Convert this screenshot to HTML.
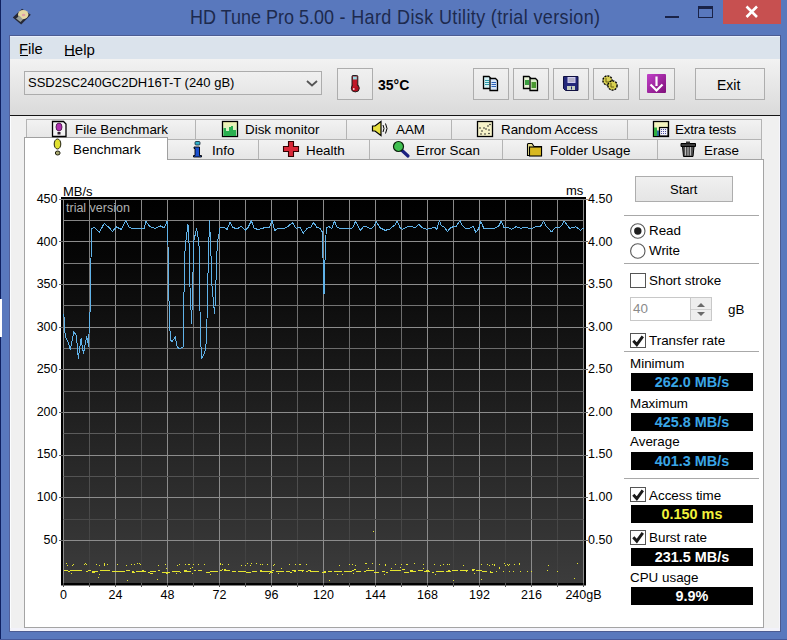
<!DOCTYPE html>
<html><head><meta charset="utf-8">
<style>
*{margin:0;padding:0;box-sizing:border-box}
html,body{width:787px;height:640px;overflow:hidden}
body{position:relative;background:#5978bd;font-family:"Liberation Sans",sans-serif;color:#000}
.a{position:absolute}
.t{position:absolute;white-space:nowrap;line-height:1}
#client{left:10px;top:36px;width:770px;height:595px;background:#f0f0f0}
#menu{left:10px;top:36px;width:770px;height:23px;background:#dbe3ec;border-top:1px solid #eaf0fc}
#tool{left:10px;top:59px;width:770px;height:56px;background:linear-gradient(#f2f2f2,#dadada)}
#dark{left:10px;top:115px;width:770px;height:1px;background:#151515}
.btn{position:absolute;border:1px solid #adadad;background:linear-gradient(#f0f0f0,#e5e5e5)}
.tab{position:absolute;border:1px solid #b4b4b4;background:linear-gradient(#f2f2f2,#e6e6e6);font-size:13.4px}
.tab span{position:absolute;white-space:nowrap;line-height:1;top:3px}
#panel{left:24px;top:159px;width:740px;height:469px;background:#fff;border:1px solid #a4a4a4}
.sep{position:absolute;left:624px;width:135px;height:1px;background:#a8a8a8}
.box{position:absolute;left:631px;width:122px;height:18px;background:#000;font-weight:bold;font-size:14.4px;text-align:center;line-height:19px}
.chk{position:absolute;left:630px;width:16px;height:15px;border:1px solid #555;background:#fff}
.lbl{font-size:13.4px}
.yl{left:20px;width:37.5px;text-align:right;font-size:12.5px}
.yr{left:588px;font-size:12.5px}
.xl{top:589px;width:80px;text-align:center;font-size:12.5px}
</style></head><body>
<!-- window border -->
<div class="a" style="left:0;top:0;width:1px;height:640px;background:#0f2060"></div>
<div class="a" style="left:0;top:299px;width:2px;height:38px;background:#fff"></div>
<!-- title -->
<div class="t" style="left:190px;top:6.6px;font-size:18px;color:#1d2a4e;transform:scaleY(1.1);transform-origin:0 0">HD Tune Pro 5.00<span style="letter-spacing:0.37px"> - Hard Disk Utility (trial version)</span></div>
<div class="a" style="left:723px;top:0;width:58px;height:24px;background:#c75050"></div>
<svg class="a" style="left:0;top:0" width="787" height="36">
 <path d="M746.5 6.5 L757 17 M757 6.5 L746.5 17" stroke="#fff" stroke-width="2.6"/>
 <rect x="665" y="16" width="14" height="2" fill="#1a2348"/>
 <rect x="698.5" y="6.5" width="14" height="11" fill="none" stroke="#1a2348" stroke-width="1"/>
 <rect x="698" y="6" width="15" height="3" fill="#1a2348"/>
 <path d="M12.8 17.5 L22 8.8 L30.8 14.8 L21.2 24.6 Z" fill="#262836"/>
 <ellipse cx="23.2" cy="14.6" rx="5.2" ry="4.6" fill="#e6d8a2"/>
 <ellipse cx="23.6" cy="15" rx="1.8" ry="1.2" fill="#e0a0a8"/>
 <path d="M16 18.5 L19.5 15.8 L23 19.5 L20.5 22 Z" fill="#9aa098"/>
</svg>
<div class="a" id="client"></div>
<div class="a" style="left:9px;top:35px;width:772px;height:1px;background:#4c5c92"></div>
<div class="a" style="left:9px;top:631px;width:772px;height:1px;background:#4c5c92"></div>
<div class="a" style="left:9px;top:35px;width:1px;height:597px;background:#52609a"></div>
<div class="a" style="left:780px;top:35px;width:1px;height:597px;background:#4c5a8e"></div>
<div class="a" style="left:10px;top:36px;width:1px;height:595px;background:#fbfdff"></div>
<div class="a" style="left:779px;top:36px;width:1px;height:595px;background:#f6f6fc"></div>
<div class="a" style="left:10px;top:628px;width:770px;height:3px;background:#f2f2fa"></div>
<div class="a" style="left:0;top:639px;width:787px;height:1px;background:#46599a"></div>
<div class="a" id="menu"></div>
<div class="t" style="left:19px;top:41.5px;font-size:14.8px">File</div>
<div class="a" style="left:20px;top:55px;width:8px;height:1px;background:#000"></div>
<div class="t" style="left:64px;top:41.5px;font-size:15px">Help</div>
<div class="a" style="left:65px;top:55px;width:10px;height:1px;background:#000"></div>
<div class="a" id="tool"></div>
<div class="a" id="dark"></div>

<!-- combo -->
<div class="a" style="left:24px;top:71px;width:298px;height:24px;border:1px solid #acacac;background:linear-gradient(#f0f0f0,#e6e6e6)"></div>
<div class="t" style="left:28px;top:76px;font-size:13px">SSD2SC240GC2DH16T-T (240 gB)</div>
<svg class="a" style="left:305px;top:79px" width="14" height="9"><path d="M2 2 L7 6.5 L12 2" fill="none" stroke="#555" stroke-width="1.8"/></svg>

<!-- toolbar buttons -->
<div class="btn" style="left:337px;top:68px;width:36px;height:32px"></div>
<div class="t" style="left:378px;top:78px;font-size:14px;font-weight:bold">35°C</div>
<div class="btn" style="left:473px;top:68px;width:36px;height:32px"></div>
<div class="btn" style="left:513px;top:68px;width:36px;height:32px"></div>
<div class="btn" style="left:553px;top:68px;width:36px;height:32px"></div>
<div class="btn" style="left:593px;top:68px;width:36px;height:32px"></div>
<div class="btn" style="left:639px;top:68px;width:36px;height:32px"></div>
<div class="btn" style="left:695px;top:68px;width:70px;height:32px"></div>
<div class="t" style="left:717px;top:78px;font-size:14px">Exit</div>

<!-- tabs row 1 -->
<div class="tab" style="left:26px;top:119px;width:170px;height:21px"><span style="left:48px">File Benchmark</span></div>
<div class="tab" style="left:195px;top:119px;width:152px;height:21px"><span style="left:49px">Disk monitor</span></div>
<div class="tab" style="left:346px;top:119px;width:106px;height:21px"><span style="left:49px">AAM</span></div>
<div class="tab" style="left:451px;top:119px;width:177px;height:21px"><span style="left:49px">Random Access</span></div>
<div class="tab" style="left:627px;top:119px;width:135px;height:21px"><span style="left:47px;letter-spacing:-0.2px">Extra tests</span></div>
<!-- tabs row 2 -->
<div class="tab" style="left:167px;top:139px;width:92px;height:21px"><span style="left:44px;top:4px">Info</span></div>
<div class="tab" style="left:258px;top:139px;width:112px;height:21px"><span style="left:47px;top:4px">Health</span></div>
<div class="tab" style="left:369px;top:139px;width:134px;height:21px"><span style="left:46px;top:4px">Error Scan</span></div>
<div class="tab" style="left:502px;top:139px;width:156px;height:21px"><span style="left:47px;top:4px">Folder Usage</span></div>
<div class="tab" style="left:657px;top:139px;width:105px;height:21px"><span style="left:46px;top:4px">Erase</span></div>

<div class="a" id="panel"></div>
<div class="a" style="left:24px;top:137px;width:144px;height:23px;background:#fff;border:1px solid #a0a0a0;border-bottom:none"></div>
<div class="t" style="left:73px;top:143px;font-size:13.4px">Benchmark</div>

<!-- right panel -->
<div class="btn" style="left:635px;top:176px;width:98px;height:26px"></div>
<div class="t" style="left:670px;top:183px;font-size:13px">Start</div>
<div class="sep" style="top:215px"></div>
<svg class="a" style="left:629px;top:222px" width="18" height="38">
 <circle cx="8.8" cy="9" r="7.2" fill="#fff" stroke="#5a5a5a" stroke-width="1.1"/>
 <circle cx="8.8" cy="9" r="3.7" fill="#1e1e1e"/>
 <circle cx="8.8" cy="29" r="7.2" fill="#fff" stroke="#5a5a5a" stroke-width="1.1"/>
</svg>
<div class="t lbl" style="left:649px;top:224px">Read</div>
<div class="t lbl" style="left:649px;top:244px">Write</div>
<div class="sep" style="top:263px"></div>
<div class="chk" style="top:273px"></div>
<div class="t lbl" style="left:649px;top:274px">Short stroke</div>
<div class="a" style="left:630px;top:297px;width:82px;height:24px;border:1px solid #c8c8c8;background:#fff"></div>
<div class="a" style="left:690px;top:298px;width:21px;height:22px;background:#eee;border-left:1px solid #c8c8c8"></div>
<div class="t lbl" style="left:633px;top:302px;color:#8a8a8a">40</div>
<div class="a" style="left:691px;top:309px;width:20px;height:1px;background:#d0d0d0"></div>
<svg class="a" style="left:690px;top:298px" width="22" height="23"><path d="M7 9 L11 5 L15 9 Z M7 14 L11 18 L15 14 Z" fill="#6a6a6a"/></svg>
<div class="t lbl" style="left:728px;top:303px">gB</div>
<div class="chk" style="top:333px"></div>
<div class="t lbl" style="left:649px;top:334px">Transfer rate</div>
<div class="sep" style="top:351px"></div>
<div class="t lbl" style="left:630px;top:357px">Minimum</div>
<div class="box" style="top:373px;color:#3aa6e6">262.0 MB/s</div>
<div class="t lbl" style="left:630px;top:397px">Maximum</div>
<div class="box" style="top:413px;color:#3aa6e6">425.8 MB/s</div>
<div class="t lbl" style="left:630px;top:435px">Average</div>
<div class="box" style="top:452px;color:#3aa6e6">401.3 MB/s</div>
<div class="sep" style="top:478px"></div>
<div class="chk" style="top:487px"></div>
<div class="t lbl" style="left:649px;top:489px">Access time</div>
<div class="box" style="top:505px;color:#f2f23c">0.150 ms</div>
<div class="chk" style="top:530px"></div>
<div class="t lbl" style="left:649px;top:531px">Burst rate</div>
<div class="box" style="top:548px;color:#fff">231.5 MB/s</div>
<div class="t lbl" style="left:630px;top:571px">CPU usage</div>
<div class="box" style="top:587px;color:#fff">9.9%</div>

<svg class="a" style="left:0;top:0" width="787" height="640">
 <defs>
  <linearGradient id="mag" x1="0" y1="0" x2="1" y2="1"><stop offset="0" stop-color="#c040c8"/><stop offset="1" stop-color="#80107a"/></linearGradient>
  <linearGradient id="dm" x1="0" y1="0" x2="0" y2="1"><stop offset="0" stop-color="#f4f4b0"/><stop offset="1" stop-color="#c8f0d8"/></linearGradient>
 </defs>
 <!-- thermometer -->
 <rect x="352" y="75.5" width="5.8" height="12" rx="1" fill="#b01020" stroke="#222" stroke-width="1"/>
 <rect x="353" y="76.5" width="3.8" height="3" fill="#9adce4"/>
 <ellipse cx="355.3" cy="88.2" rx="4" ry="3.7" fill="#b01020" stroke="#222" stroke-width="1"/>
 <rect x="353" y="80" width="3.8" height="7.5" fill="#c01828"/><rect x="353" y="88" width="1.5" height="2" fill="#f0c0c8"/>
 <!-- copy docs -->
 <g stroke="#000" stroke-width="1.3" stroke-linejoin="miter">
  <path d="M483.5 76.5 H489 L491 78.5 V88.5 H483.5 Z" fill="#d4f2f6"/>
  <path d="M490 78.5 H495.5 L497.5 80.5 V90.5 H490 Z" fill="#d8e6f8"/>
  <path d="M523.5 76.5 H529 L531 78.5 V88.5 H523.5 Z" fill="#e8f4d8"/>
  <path d="M530 78.5 H535.5 L537.5 80.5 V90.5 H530 Z" fill="#d8ecc8"/>
 </g>
 <g stroke-width="1.2">
  <path d="M485 80.5 H489 M485 82.5 H489 M485 84.5 H489" stroke="#2a9aa8"/>
  <path d="M491.5 82.5 H496 M491.5 84.5 H496 M491.5 86.5 H496" stroke="#2a60b8"/>
 </g>
 <rect x="525" y="80" width="4" height="5" fill="#3aa040"/>
 <rect x="531.5" y="82" width="4.5" height="6" fill="#4a9a30"/>
 <!-- floppy -->
 <path d="M563.5 76.5 H578 V90.5 H565.5 L563.5 88.5 Z" fill="#24287a" stroke="#101040" stroke-width="1"/>
 <rect x="567.5" y="77" width="8" height="6" fill="#d0ccf0"/>
 <path d="M568.5 79 H574.5 M568.5 81 H574.5" stroke="#8a8a90" stroke-width="0.8"/>
 <rect x="567" y="86" width="8" height="4" fill="#c8d0c0"/>
 <rect x="571" y="86.5" width="1" height="3" fill="#24287a"/>
 <!-- coins -->
 <g stroke="#000" stroke-width="1.4" fill="#d8d050">
  <circle cx="607.5" cy="80.5" r="4.6" stroke-dasharray="2 1"/>
  <circle cx="612.5" cy="85.5" r="4.6" stroke-dasharray="2 1"/>
 </g>
 <path d="M606 78 V82 H609 M611 83 V87 H614" stroke="#6a6010" stroke-width="1" fill="none"/>
 <!-- magenta -->
 <rect x="647" y="74" width="19" height="19" rx="1" fill="url(#mag)"/>
 <path d="M656.5 76.5 V86" stroke="#fff" stroke-width="2.2"/>
 <path d="M650.5 84.5 L656.5 90.5 L662.5 84.5" stroke="#fff" stroke-width="2.2" fill="none"/>
 <!-- tab icons row1 -->
 <path d="M52.5 121.5 H63.5 L66 124 V136.5 H52.5 Z" fill="#f4f4f4" stroke="#000" stroke-width="1.3"/>
 <ellipse cx="59" cy="127" rx="3" ry="4" fill="#b030b0" stroke="#401040" stroke-width="0.8"/>
 <rect x="57.5" y="132" width="3" height="2.5" fill="#302030"/>
 <rect x="222.5" y="121.5" width="15" height="15" fill="url(#dm)" stroke="#000" stroke-width="1.3"/>
 <path d="M223.5 136 V128 H226 V131 H229 V127 H231 V126 H233 V130 H236 V136 Z" fill="#2ab050"/>
 <path d="M372.5 126 H375 L381 121.5 V135.5 L375 131 H372.5 Z" fill="#e8e040" stroke="#000" stroke-width="1.2"/>
 <path d="M383 125 Q385 128.5 383 132 M385.5 123.5 Q388.5 128.5 385.5 133.5" stroke="#000" stroke-width="1" fill="none"/>
 <rect x="477.5" y="121.5" width="15" height="15" fill="#f6f2c8" stroke="#000" stroke-width="1.3"/>
 <g fill="#222"><circle cx="480" cy="128" r=".8"/><circle cx="484" cy="128" r=".8"/><circle cx="482" cy="131" r=".8"/><circle cx="486" cy="129" r=".8"/><circle cx="488" cy="126" r=".8"/><circle cx="489" cy="130" r=".8"/><circle cx="481" cy="134" r=".8"/><circle cx="485" cy="134" r=".8"/><circle cx="489" cy="133.5" r=".8"/><circle cx="490" cy="124.5" r=".8"/></g>
 <rect x="653.5" y="121.5" width="15" height="15" fill="#f4f4c0" stroke="#000" stroke-width="1.3"/>
 <rect x="654" y="127.5" width="3" height="8.5" fill="#30b040"/>
 <rect x="657" y="130.5" width="2.5" height="5.5" fill="#2a70a0"/>
 <rect x="659.5" y="127.5" width="8.5" height="8.5" fill="#f0f0f8" stroke="#000" stroke-width="1.2"/>
 <g fill="#5050a0"><rect x="661" y="129" width="1" height="1"/><rect x="663" y="129" width="1" height="1"/><rect x="665" y="129" width="1" height="1"/><rect x="661" y="131" width="1" height="1"/><rect x="663" y="131" width="1" height="1"/><rect x="665" y="131" width="1" height="1"/><rect x="661" y="133" width="1" height="1"/><rect x="663" y="133" width="1" height="1"/><rect x="665" y="133" width="1" height="1"/></g>
 <!-- row2 icons -->
 <ellipse cx="57.5" cy="144" rx="3.3" ry="5" fill="#e0e030" stroke="#202010" stroke-width="1"/>
 <ellipse cx="57.7" cy="153" rx="2.4" ry="2" fill="#a8a870" stroke="#202010" stroke-width="1"/>
 <rect x="195" y="141.5" width="5" height="3.5" rx="1" fill="#30b0c8" stroke="#102030" stroke-width="0.8"/>
 <path d="M194 147 H199.5 V155.5 H201.5 V157 H193.5 V155.5 H195 V148.5 H194 Z" fill="#1a50d0" stroke="#000" stroke-width="0.9"/>
 <path d="M288.5 141.5 H293.5 V146.5 H298.5 V151.5 H293.5 V156.5 H288.5 V151.5 H283.5 V146.5 H288.5 Z" fill="#d82838" stroke="#300" stroke-width="1.1"/>
 <path d="M401.5 150 L408 156" stroke="#1a2080" stroke-width="3.2" stroke-linecap="round"/>
 <circle cx="398.5" cy="146.5" r="5" fill="#40c050" stroke="#0a200a" stroke-width="1.2"/>
 <path d="M527.5 144 V155.5 H541.5 V146.5 H534 L532 143.5 H528.5 Z" fill="#e8e090" stroke="#000" stroke-width="1.1"/>
 <rect x="529.5" y="147" width="12" height="9" fill="#d8b820" stroke="#000" stroke-width="1.1"/>
 <path d="M681 143.5 H695.5 V146.5 H681 Z" fill="#3a3a3a" stroke="#000" stroke-width="1"/>
 <path d="M682.5 146.5 H694 L693 156.5 H683.5 Z" fill="#505050" stroke="#000" stroke-width="1"/>
 <path d="M685.5 147 V155.5 M688 147 V155.5 M690.5 147 V155.5" stroke="#c8c8c8" stroke-width="0.9"/>
 <rect x="686" y="141.5" width="4" height="2" fill="#333"/>
 <!-- checkmarks -->
 <g stroke="#1a1a1a" stroke-width="2.9" fill="none">
  <path d="M633.3 340.8 L636.8 344.6 L642.8 336.4"/>
  <path d="M633.3 494.8 L636.8 498.6 L642.8 490.4"/>
  <path d="M633.3 537.3 L636.8 541.1 L642.8 532.9"/>
 </g>
</svg>

<!-- chart -->
<svg class="a" style="left:0;top:0" width="787" height="640">
<defs><linearGradient id="bg" x1="0" y1="0" x2="0" y2="1"><stop offset="0" stop-color="#000"/><stop offset="0.15" stop-color="#060606"/><stop offset="1" stop-color="#3c3c3c"/></linearGradient></defs>
<rect x="61" y="197" width="525" height="388.5" fill="#000"/>
<rect x="63" y="199" width="521" height="384" fill="url(#bg)"/>
<defs><linearGradient id="mg" gradientUnits="userSpaceOnUse" x1="0" y1="199" x2="0" y2="583"><stop offset="0" stop-color="#8a8a8a"/><stop offset="0.5" stop-color="#5c5c5c"/><stop offset="1" stop-color="#3e3e3e"/></linearGradient></defs>
<line x1="63.5" y1="199" x2="63.5" y2="583" stroke="#8c8c8c" stroke-width="1"/>
<line x1="63.5" y1="583" x2="63.5" y2="587" stroke="#555" stroke-width="1"/>
<line x1="89.5" y1="199" x2="89.5" y2="583" stroke="url(#mg)" stroke-width="1"/>
<line x1="89.5" y1="583" x2="89.5" y2="587" stroke="#555" stroke-width="1"/>
<line x1="115.5" y1="199" x2="115.5" y2="583" stroke="#8c8c8c" stroke-width="1"/>
<line x1="115.5" y1="583" x2="115.5" y2="587" stroke="#555" stroke-width="1"/>
<line x1="141.5" y1="199" x2="141.5" y2="583" stroke="url(#mg)" stroke-width="1"/>
<line x1="141.5" y1="583" x2="141.5" y2="587" stroke="#555" stroke-width="1"/>
<line x1="167.5" y1="199" x2="167.5" y2="583" stroke="#8c8c8c" stroke-width="1"/>
<line x1="167.5" y1="583" x2="167.5" y2="587" stroke="#555" stroke-width="1"/>
<line x1="193.5" y1="199" x2="193.5" y2="583" stroke="url(#mg)" stroke-width="1"/>
<line x1="193.5" y1="583" x2="193.5" y2="587" stroke="#555" stroke-width="1"/>
<line x1="219.5" y1="199" x2="219.5" y2="583" stroke="#8c8c8c" stroke-width="1"/>
<line x1="219.5" y1="583" x2="219.5" y2="587" stroke="#555" stroke-width="1"/>
<line x1="245.5" y1="199" x2="245.5" y2="583" stroke="url(#mg)" stroke-width="1"/>
<line x1="245.5" y1="583" x2="245.5" y2="587" stroke="#555" stroke-width="1"/>
<line x1="271.5" y1="199" x2="271.5" y2="583" stroke="#8c8c8c" stroke-width="1"/>
<line x1="271.5" y1="583" x2="271.5" y2="587" stroke="#555" stroke-width="1"/>
<line x1="297.5" y1="199" x2="297.5" y2="583" stroke="url(#mg)" stroke-width="1"/>
<line x1="297.5" y1="583" x2="297.5" y2="587" stroke="#555" stroke-width="1"/>
<line x1="323.5" y1="199" x2="323.5" y2="583" stroke="#8c8c8c" stroke-width="1"/>
<line x1="323.5" y1="583" x2="323.5" y2="587" stroke="#555" stroke-width="1"/>
<line x1="349.5" y1="199" x2="349.5" y2="583" stroke="url(#mg)" stroke-width="1"/>
<line x1="349.5" y1="583" x2="349.5" y2="587" stroke="#555" stroke-width="1"/>
<line x1="375.5" y1="199" x2="375.5" y2="583" stroke="#8c8c8c" stroke-width="1"/>
<line x1="375.5" y1="583" x2="375.5" y2="587" stroke="#555" stroke-width="1"/>
<line x1="401.5" y1="199" x2="401.5" y2="583" stroke="url(#mg)" stroke-width="1"/>
<line x1="401.5" y1="583" x2="401.5" y2="587" stroke="#555" stroke-width="1"/>
<line x1="427.5" y1="199" x2="427.5" y2="583" stroke="#8c8c8c" stroke-width="1"/>
<line x1="427.5" y1="583" x2="427.5" y2="587" stroke="#555" stroke-width="1"/>
<line x1="453.5" y1="199" x2="453.5" y2="583" stroke="url(#mg)" stroke-width="1"/>
<line x1="453.5" y1="583" x2="453.5" y2="587" stroke="#555" stroke-width="1"/>
<line x1="479.5" y1="199" x2="479.5" y2="583" stroke="#8c8c8c" stroke-width="1"/>
<line x1="479.5" y1="583" x2="479.5" y2="587" stroke="#555" stroke-width="1"/>
<line x1="505.5" y1="199" x2="505.5" y2="583" stroke="url(#mg)" stroke-width="1"/>
<line x1="505.5" y1="583" x2="505.5" y2="587" stroke="#555" stroke-width="1"/>
<line x1="531.5" y1="199" x2="531.5" y2="583" stroke="#8c8c8c" stroke-width="1"/>
<line x1="531.5" y1="583" x2="531.5" y2="587" stroke="#555" stroke-width="1"/>
<line x1="557.5" y1="199" x2="557.5" y2="583" stroke="url(#mg)" stroke-width="1"/>
<line x1="557.5" y1="583" x2="557.5" y2="587" stroke="#555" stroke-width="1"/>
<line x1="583.5" y1="199" x2="583.5" y2="583" stroke="#8c8c8c" stroke-width="1"/>
<line x1="583.5" y1="583" x2="583.5" y2="587" stroke="#555" stroke-width="1"/>
<line x1="63.5" y1="540.5" x2="583.5" y2="540.5" stroke="#8c8c8c" stroke-width="1"/>
<line x1="59" y1="540.5" x2="63.5" y2="540.5" stroke="#666" stroke-width="1"/>
<line x1="583.5" y1="540.5" x2="588" y2="540.5" stroke="#666" stroke-width="1"/>
<line x1="63.5" y1="519.5" x2="583.5" y2="519.5" stroke="#4a4a4a" stroke-width="1"/>
<line x1="63.5" y1="497.5" x2="583.5" y2="497.5" stroke="#8c8c8c" stroke-width="1"/>
<line x1="59" y1="497.5" x2="63.5" y2="497.5" stroke="#666" stroke-width="1"/>
<line x1="583.5" y1="497.5" x2="588" y2="497.5" stroke="#666" stroke-width="1"/>
<line x1="63.5" y1="476.5" x2="583.5" y2="476.5" stroke="#535353" stroke-width="1"/>
<line x1="63.5" y1="455.5" x2="583.5" y2="455.5" stroke="#8c8c8c" stroke-width="1"/>
<line x1="59" y1="455.5" x2="63.5" y2="455.5" stroke="#666" stroke-width="1"/>
<line x1="583.5" y1="455.5" x2="588" y2="455.5" stroke="#666" stroke-width="1"/>
<line x1="63.5" y1="433.5" x2="583.5" y2="433.5" stroke="#5b5b5b" stroke-width="1"/>
<line x1="63.5" y1="412.5" x2="583.5" y2="412.5" stroke="#8c8c8c" stroke-width="1"/>
<line x1="59" y1="412.5" x2="63.5" y2="412.5" stroke="#666" stroke-width="1"/>
<line x1="583.5" y1="412.5" x2="588" y2="412.5" stroke="#666" stroke-width="1"/>
<line x1="63.5" y1="391.5" x2="583.5" y2="391.5" stroke="#636363" stroke-width="1"/>
<line x1="63.5" y1="369.5" x2="583.5" y2="369.5" stroke="#8c8c8c" stroke-width="1"/>
<line x1="59" y1="369.5" x2="63.5" y2="369.5" stroke="#666" stroke-width="1"/>
<line x1="583.5" y1="369.5" x2="588" y2="369.5" stroke="#666" stroke-width="1"/>
<line x1="63.5" y1="348.5" x2="583.5" y2="348.5" stroke="#6c6c6c" stroke-width="1"/>
<line x1="63.5" y1="327.5" x2="583.5" y2="327.5" stroke="#8c8c8c" stroke-width="1"/>
<line x1="59" y1="327.5" x2="63.5" y2="327.5" stroke="#666" stroke-width="1"/>
<line x1="583.5" y1="327.5" x2="588" y2="327.5" stroke="#666" stroke-width="1"/>
<line x1="63.5" y1="305.5" x2="583.5" y2="305.5" stroke="#747474" stroke-width="1"/>
<line x1="63.5" y1="284.5" x2="583.5" y2="284.5" stroke="#8c8c8c" stroke-width="1"/>
<line x1="59" y1="284.5" x2="63.5" y2="284.5" stroke="#666" stroke-width="1"/>
<line x1="583.5" y1="284.5" x2="588" y2="284.5" stroke="#666" stroke-width="1"/>
<line x1="63.5" y1="263.5" x2="583.5" y2="263.5" stroke="#7d7d7d" stroke-width="1"/>
<line x1="63.5" y1="241.5" x2="583.5" y2="241.5" stroke="#8c8c8c" stroke-width="1"/>
<line x1="59" y1="241.5" x2="63.5" y2="241.5" stroke="#666" stroke-width="1"/>
<line x1="583.5" y1="241.5" x2="588" y2="241.5" stroke="#666" stroke-width="1"/>
<line x1="63.5" y1="220.5" x2="583.5" y2="220.5" stroke="#858585" stroke-width="1"/>
<line x1="63.5" y1="199.5" x2="583.5" y2="199.5" stroke="#8c8c8c" stroke-width="1"/>
<line x1="59" y1="199.5" x2="63.5" y2="199.5" stroke="#666" stroke-width="1"/>
<line x1="583.5" y1="199.5" x2="588" y2="199.5" stroke="#666" stroke-width="1"/>
<line x1="59" y1="199.5" x2="588" y2="199.5" stroke="#8c8c8c" stroke-width="1"/>
<path d="M64 570h4 M68 571h2 M70 570h3 M72 570h2 M74 570h3 M76 570h6 M86 571h2 M88 570h3 M92 571h4 M92 572h3 M96 571h2 M100 570h4 M104 570h6 M112 571h8 M120 571h5 M126 570h4 M132 571h2 M132 572h3 M136 571h4 M140 571h6 M142 570h2 M148 572h2 M150 573h2 M150 571h6 M158 570h2 M162 572h8 M166 573h2 M172 571h8 M180 572h1 M184 571h2 M184 570h3 M186 571h5 M194 570h2 M198 570h4 M206 572h4 M210 571h8 M220 570h2 M222 569h1 M224 570h6 M224 569h2 M232 571h4 M238 571h8 M246 572h5 M252 571h5 M260 571h8 M260 570h2 M268 571h2 M270 571h2 M270 572h3 M272 570h2 M276 571h8 M286 571h4 M290 572h2 M292 570h4 M294 571h2 M298 570h6 M302 571h1 M306 571h2 M308 570h3 M310 571h6 M316 571h3 M322 572h4 M324 571h2 M328 571h3 M330 571h2 M334 571h8 M344 571h8 M352 570h2 M354 569h2 M356 571h5 M364 571h2 M366 570h8 M374 572h5 M382 571h3 M386 572h2 M390 570h8 M398 570h3 M402 569h3 M404 572h5 M410 571h6 M410 570h3 M418 570h5 M424 571h2 M426 570h3 M426 571h4 M432 572h2 M436 571h8 M446 571h5 M448 570h2 M452 570h6 M460 570h3 M462 570h6 M466 571h1 M472 570h2 M472 569h3 M476 570h6 M482 571h5 M490 571h1 M490 572h3 M496 571h1 M503 571h1 M509 571h1 M513 571h1 M520 571h1 M527 571h1 M531 571h1 M548 565h1 M547 570h1 M577 563h1 M574 578h1 M557 571h1 M434 564h1 M385 565h1 M487 564h1 M449 564h1 M256 563h1 M267 564h1 M372 563h1 M99 565h1 M423 564h1 M494 565h1 M131 564h1 M507 564h1 M406 564h1 M247 563h1 M140 564h1 M139 563h1 M519 563h1 M220 564h1 M228 564h1 M395 564h1 M220 563h1 M267 564h1 M241 565h1 M299 564h1 M117 564h1 M509 564h1 M104 565h1 M84 564h1 M189 564h1 M440 565h1 M251 563h1 M385 564h1 M193 564h1 M260 564h1 M188 564h1 M355 565h1 M104 564h1 M96 564h1 M273 565h1 M519 563h1 M489 565h1 M349 564h1 M306 564h1 M494 564h1 M185 564h1 M158 565h1 M352 564h1 M198 564h1 M189 564h1 M519 564h1 M73 564h1 M300 564h1 M492 564h1 M366 563h1 M365 563h1 M508 565h1 M379 564h1 M222 564h1 M250 565h1 M514 564h1 M72 565h1 M262 564h1 M104 563h1 M463 565h1 M339 565h1 M86 564h1 M137 563h1 M67 565h1 M505 565h1 M177 565h1 M165 564h1 M66 563h1 M104 565h1 M295 564h1 M179 564h1 M107 564h1 M131 564h1 M245 565h1 M204 564h1 M104 564h1 M366 563h1 M414 563h1 M134 564h1 M85 563h1 M401 564h1 M481 564h1 M443 564h1 M104 564h1 M126 565h1 M504 563h1 M447 564h1 M352 564h1 M289 564h1 M274 564h1 M407 564h1 M353 573h1 M391 568h1 M176 573h1 M435 574h1 M384 574h1 M166 568h1 M281 568h1 M99 574h1 M400 567h1 M342 574h1 M99 574h1 M210 574h1 M337 574h1 M71 573h1 M278 573h1 M368 568h1 M192 567h1 M190 568h1 M269 573h1 M499 567h1 M152 573h1 M474 573h1 M192 573h1 M423 568h1 M499 568h1 M157 579h1 M98 577h1 M127 580h1 M481 579h1 M329 580h1 M453 580h1 M373 531h1" stroke="#e4e430" stroke-width="1" transform="translate(0,0.5)"/>
<polyline points="63.6,314 64.2,319 64.7,330.3 65.6,336.9 68,341.6 70.3,350 72.2,339.7 73.9,331.7 76.4,335.9 78.3,358.4 81.1,338.7 83.4,353.7 86.7,336.4 88.6,346.2 89.5,319 90.5,305 91,258 91.7,228.6 94.7,227.4 99.2,232.4 104.3,223.3 109.4,227.9 112.4,231.4 116.5,226.8 121.1,229.4 125.7,220.8 129.7,227.9 139.9,228.9 143.9,228.9 146,221.3 149.5,226.3 155.1,228.4 160.2,225.8 164.1,227.9 167.1,221.3 168,245 168.5,280 169.5,320 170.4,339.5 172,342 175.3,336.6 177,346.4 179.1,348.6 183,347.5 183.6,316.9 184.6,257 185.4,244.6 188,224.3 189.4,250 189.5,274 190.5,300 191.7,323.4 192.5,290 193.4,258 194,240 196.6,228.4 198.5,240 199.5,251 199.6,290 200.5,336.6 201.6,358.5 204.9,351.9 206.5,341 207,319 207.9,277 208.8,250 209.3,220.2 210.8,245 211.5,281 213.3,300 214.5,313.5 215.5,300 216.2,273 217.2,246 217.9,240 220,227.9 225,227.9 227.1,229.4 230.1,222.3 233.2,227.9 238,228.3 241.1,226.3 245.2,230.3 248.2,227.3 251.3,220.7 254.3,228.3 257.4,229.3 261.4,228.8 265.5,227.3 269.6,227.3 272.1,220.2 274.6,230.8 277.7,228.3 282.8,228.8 286.8,227.3 292.4,222.7 296,228.3 300,227.3 303.1,233.4 307.2,228.3 311.2,226.8 313.7,222.4 316.6,227.3 320.2,228.3 322.3,232 324,294.4 325.6,240 326.5,228 328.8,226.3 331.8,228.8 334.4,221.2 337.4,227.8 340.5,228.3 345.6,228.8 350.7,228.8 352.7,227.3 355.7,221.2 360.3,230.3 363.4,226.8 366.4,226.8 371,228.8 374.5,225.2 376.1,221.7 380.1,227.8 385.2,230.3 389.6,229.3 392.1,226.8 394.7,225.2 397.2,221.2 400.2,227.8 402.3,229.3 408.4,226.3 415.5,227.3 418.5,224.2 421.6,227.3 426.7,229.3 430.7,228.3 434.8,227.3 436.8,229.3 439.4,220.7 441.4,225.8 443.9,226.8 447.5,231.3 451.1,227.3 456.1,226.3 460.2,220.4 462,225.2 465.1,228.3 469.1,228.3 473.2,226.3 475.8,232.4 478.8,228.3 480.8,221.7 483.9,228.3 488.5,228.8 494.6,228.3 498.6,226.3 501.2,221.2 504.2,227.8 507.8,227.3 511.8,229.3 515.9,226.8 521,228.3 525,227.3 531.2,228.9 536.3,226.3 540.3,226.8 543.4,221.3 546.4,226.3 551.5,231.9 555.1,227.9 560.7,226.8 564.2,221.3 569.8,228.4 575.9,226.8 580.5,230.4 583.5,227.9" fill="none" stroke="#60b2e8" stroke-width="1" stroke-linejoin="round" shape-rendering="crispEdges"/>
</svg>
<div class="t yl" style="top:193.2px">450</div>
<div class="t yr" style="top:193.2px">4.50</div>
<div class="t yl" style="top:235.7px">400</div>
<div class="t yr" style="top:235.7px">4.00</div>
<div class="t yl" style="top:278.3px">350</div>
<div class="t yr" style="top:278.3px">3.50</div>
<div class="t yl" style="top:320.8px">300</div>
<div class="t yr" style="top:320.8px">3.00</div>
<div class="t yl" style="top:363.3px">250</div>
<div class="t yr" style="top:363.3px">2.50</div>
<div class="t yl" style="top:405.9px">200</div>
<div class="t yr" style="top:405.9px">2.00</div>
<div class="t yl" style="top:448.4px">150</div>
<div class="t yr" style="top:448.4px">1.50</div>
<div class="t yl" style="top:490.9px">100</div>
<div class="t yr" style="top:490.9px">1.00</div>
<div class="t yl" style="top:533.5px">50</div>
<div class="t yr" style="top:533.5px">0.50</div>
<div class="t xl" style="left:23.5px">0</div>
<div class="t xl" style="left:75.5px">24</div>
<div class="t xl" style="left:127.5px">48</div>
<div class="t xl" style="left:179.5px">72</div>
<div class="t xl" style="left:231.5px">96</div>
<div class="t xl" style="left:283.5px">120</div>
<div class="t xl" style="left:335.5px">144</div>
<div class="t xl" style="left:387.5px">168</div>
<div class="t xl" style="left:439.5px">192</div>
<div class="t xl" style="left:491.5px">216</div>
<div class="t xl" style="left:543.5px">240gB</div>
<div class="t" style="left:63px;top:185px;font-size:13px">MB/s</div>
<div class="t" style="left:566px;top:184px;font-size:13px">ms</div>
<div class="t" style="left:66px;top:201.8px;font-size:12.5px;color:#b0b0b0">trial version</div>
</body></html>
